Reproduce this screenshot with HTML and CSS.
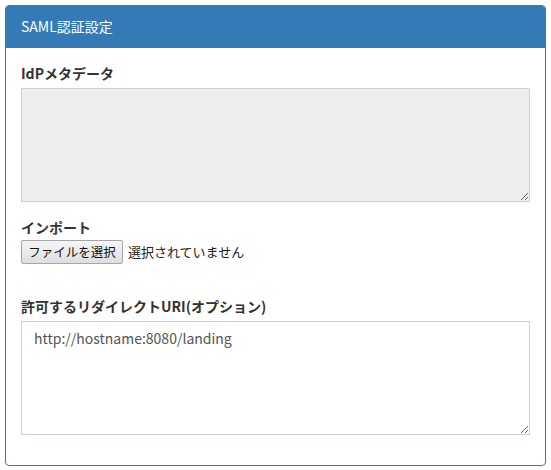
FILE: index.html
```html
<!DOCTYPE html>
<html lang="ja">
<head>
<meta charset="utf-8">
<title>SAML認証設定</title>
<link rel="stylesheet" href="styles.css">
</head>
<body>
<div class="panel">
  <div class="panel-heading">SAML認証設定</div>
  <div class="panel-body">
    <div class="form-group">
      <label class="control-label">IdPメタデータ</label>
      <textarea class="form-control readonly" readonly></textarea>
    </div>
    <div class="form-group file-group">
      <label class="control-label">インポート</label>
      <div class="file-row">
        <button type="button" class="file-btn">ファイルを選択</button>
        <span class="file-status">選択されていません</span>
      </div>
    </div>
    <div class="form-group">
      <label class="control-label">許可するリダイレクトURI(オプション)</label>
      <textarea class="form-control" spellcheck="false">http://hostname:8080/landing</textarea>
    </div>
  </div>
</div>
</body>
</html>
```

FILE: styles.css
```css
html, body {
  margin: 0;
  padding: 0;
  background: #fff;
}
body {
  padding: 5px;
  font-family: "Noto Sans CJK JP", "Noto Sans", sans-serif;
  font-size: 14px;
  line-height: 20px;
  color: #333;
}
.panel {
  width: 541px;
  box-sizing: border-box;
  border: 1px solid #337ab7;
  border-radius: 4px;
  overflow: hidden;
}
.panel-heading {
  background: #337ab7;
  color: #fff;
  padding: 10px 15px 11px;
  border-bottom: 1px solid #337ab7;
  font-size: 14px;
  line-height: 20px;
}
.panel-body {
  padding: 15px;
}
.form-group {
  margin-bottom: 15px;
}
.control-label {
  display: block;
  font-weight: bold;
  margin-bottom: 5px;
  color: #333;
}
.form-control {
  display: block;
  width: 100%;
  height: 114px;
  box-sizing: border-box;
  border: 1px solid #cdd0d8;
  border-radius: 0;
  padding: 6px 12px;
  font-family: "Noto Sans CJK JP", "Noto Sans", sans-serif;
  font-size: 14px;
  line-height: 20px;
  color: #555;
  background: #fff;
  resize: vertical;
  margin: 0;
}
.form-control.readonly {
  background: #eee;
}
.file-group .control-label {
  margin-bottom: 3px;
}
.file-group {
  margin-bottom: 32px;
}
.file-row {
  display: flex;
  align-items: center;
  height: 24px;
}
.file-btn {
  height: 24px;
  width: 102px;
  box-sizing: border-box;
  padding: 0 6px;
  border: 1px solid #a6a6a6;
  border-radius: 2px;
  background: linear-gradient(#f6f6f6, #dedede);
  font-family: "Noto Sans CJK JP", sans-serif;
  font-size: 12.5px;
  color: #111;
  line-height: 20px;
  margin: 0;
}
.file-status {
  margin-left: 5px;
  font-size: 13px;
  color: #222;
}
```
